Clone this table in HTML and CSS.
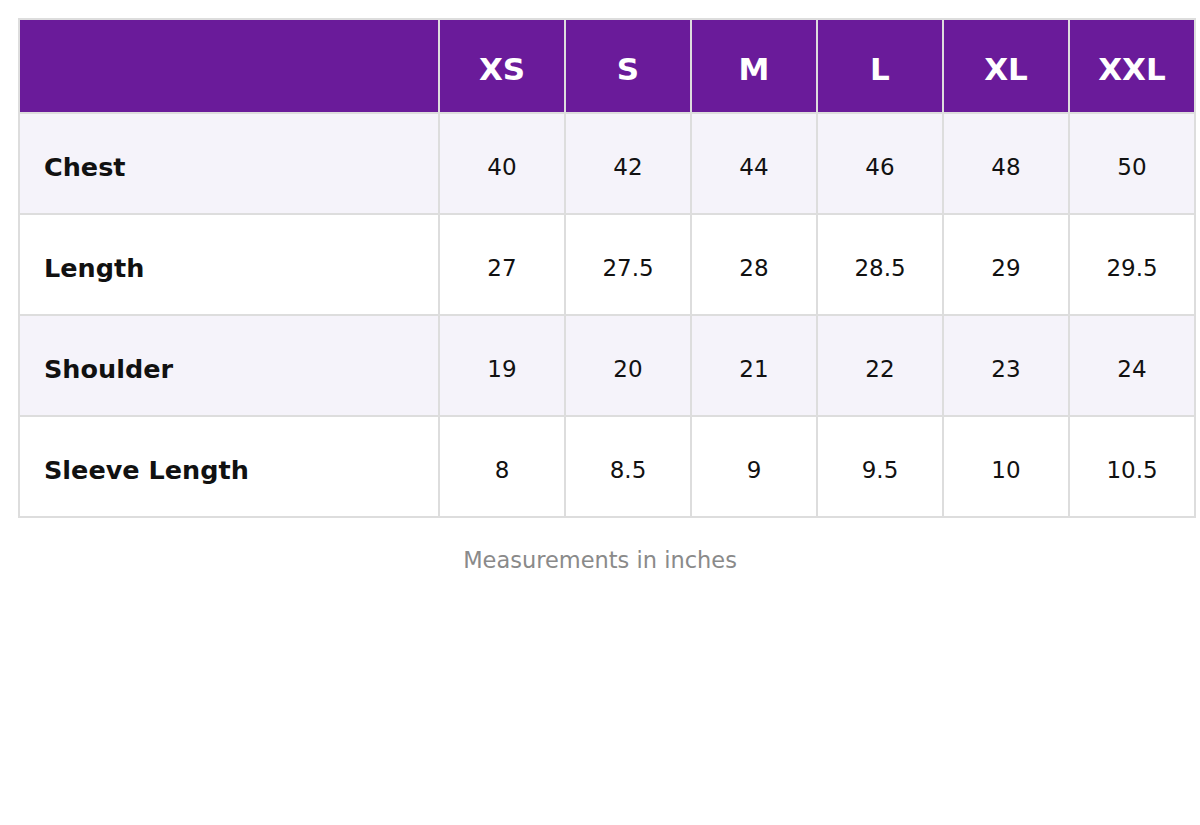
FILE: index.html
```html
<!DOCTYPE html>
<html>
<head>
<meta charset="utf-8">
<link rel="stylesheet" href="styles.css">
</head>
<body>
<div class="wrap">
  <table class="chart">
    <colgroup>
      <col class="c-label">
      <col class="c-size"><col class="c-size"><col class="c-size"><col class="c-size"><col class="c-size"><col class="c-size">
    </colgroup>
    <thead>
      <tr><th></th><th>XS</th><th>S</th><th>M</th><th>L</th><th>XL</th><th>XXL</th></tr>
    </thead>
    <tbody>
      <tr class="alt"><td class="label">Chest</td><td>40</td><td>42</td><td>44</td><td>46</td><td>48</td><td>50</td></tr>
      <tr><td class="label">Length</td><td>27</td><td>27.5</td><td>28</td><td>28.5</td><td>29</td><td>29.5</td></tr>
      <tr class="alt"><td class="label">Shoulder</td><td>19</td><td>20</td><td>21</td><td>22</td><td>23</td><td>24</td></tr>
      <tr><td class="label">Sleeve Length</td><td>8</td><td>8.5</td><td>9</td><td>9.5</td><td>10</td><td>10.5</td></tr>
    </tbody>
  </table>
</div>
<p class="note">Measurements in inches</p>
</body>
</html>
```

FILE: styles.css
```css
html, body {
  margin: 0;
  padding: 0;
  background: #ffffff;
  font-family: "DejaVu Sans", sans-serif;
}
.wrap {
  padding: 18px 4px 0 18px;
}
.chart {
  border-collapse: collapse;
  table-layout: fixed;
  width: 1178px;
  border: 2px solid #dddddd;
}
.c-label { width: 420px; }
.c-size { width: 126px; }
.chart th,
.chart td {
  border: 2px solid #dddddd;
  text-align: center;
  padding: 0;
}
.chart thead th {
  background: #6a1b9a;
  color: #ffffff;
  font-weight: bold;
  font-size: 31px;
  height: 94px;
  padding-top: 6px;
  box-sizing: border-box;
}
.chart tbody td {
  height: 101px;
  font-size: 23px;
  color: #111111;
  padding-top: 6px;
  box-sizing: border-box;
}
.chart tbody tr.alt td {
  background: #f5f3fa;
}
.chart tbody td.label {
  text-align: left;
  padding-left: 24px;
  font-weight: bold;
  font-size: 25.5px;
  padding-top: 6px;
}
.note {
  margin: 29px 0 0;
  text-align: center;
  color: #8a8a8a;
  font-size: 22.5px;
}
```
